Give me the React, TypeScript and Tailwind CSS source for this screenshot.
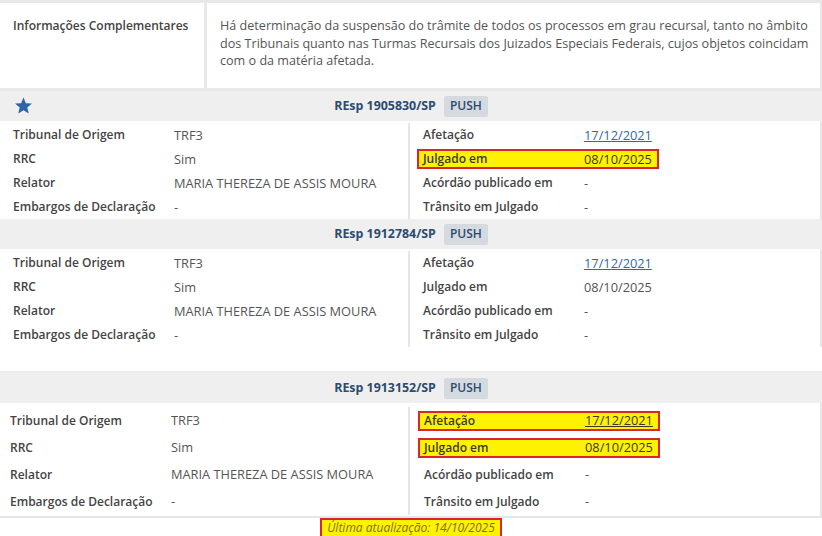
import React from 'react';

type Row = { label: string; value: string; link?: boolean; mark?: boolean };

interface Processo {
  numero: string;
  star?: boolean;
  big?: boolean;
  left: Row[];
  right: Row[];
}

const processos: Processo[] = [
  {
    numero: 'REsp 1905830/SP',
    star: true,
    left: [
      { label: 'Tribunal de Origem', value: 'TRF3' },
      { label: 'RRC', value: 'Sim' },
      { label: 'Relator', value: 'MARIA THEREZA DE ASSIS MOURA' },
      { label: 'Embargos de Declaração', value: '-' },
    ],
    right: [
      { label: 'Afetação', value: '17/12/2021', link: true },
      { label: 'Julgado em', value: '08/10/2025', mark: true },
      { label: 'Acórdão publicado em', value: '-' },
      { label: 'Trânsito em Julgado', value: '-' },
    ],
  },
  {
    numero: 'REsp 1912784/SP',
    left: [
      { label: 'Tribunal de Origem', value: 'TRF3' },
      { label: 'RRC', value: 'Sim' },
      { label: 'Relator', value: 'MARIA THEREZA DE ASSIS MOURA' },
      { label: 'Embargos de Declaração', value: '-' },
    ],
    right: [
      { label: 'Afetação', value: '17/12/2021', link: true },
      { label: 'Julgado em', value: '08/10/2025' },
      { label: 'Acórdão publicado em', value: '-' },
      { label: 'Trânsito em Julgado', value: '-' },
    ],
  },
];

const ultimo: Processo = {
  numero: 'REsp 1913152/SP',
  big: true,
  left: [
    { label: 'Tribunal de Origem', value: 'TRF3' },
    { label: 'RRC', value: 'Sim' },
    { label: 'Relator', value: 'MARIA THEREZA DE ASSIS MOURA' },
    { label: 'Embargos de Declaração', value: '-' },
  ],
  right: [
    { label: 'Afetação', value: '17/12/2021', link: true, mark: true },
    { label: 'Julgado em', value: '08/10/2025', mark: true },
    { label: 'Acórdão publicado em', value: '-' },
    { label: 'Trânsito em Julgado', value: '-' },
  ],
};

const Star = () => (
  <svg viewBox="0 0 24 24" className="w-[19px] h-[19px]" fill="#2f65a6">
    <path d="M12 1.8l3 7.2 7.7.6-5.9 5 1.8 7.6L12 18.1l-6.6 4.1 1.8-7.6-5.9-5 7.7-.6z" />
  </svg>
);

const Cell = ({ row, big }: { row: Row; big?: boolean }) => {
  const value = row.link ? (
    <span className={row.mark ? 'underline text-[12.8px] text-[#3a3a20]' : 'underline text-[12.8px] text-[#2a6ab3]'}>{row.value}</span>
  ) : (
    <span className={row.mark ? 'text-[12.8px] text-[#3a3a20]' : 'text-[12.8px] text-[#555]'}>{row.value}</span>
  );
  const rowH = big ? 'h-[27px]' : 'h-[24px]';
  if (row.mark) {
    return (
      <div className={`flex items-center ${rowH}`}>
        <div className="flex items-center w-[242px] -ml-[6px] h-[20px] border-2 border-[#d8262b] bg-[#fff200] pl-[4px]">
          <span className="w-[161px] font-semibold text-[#3a3a20]">{row.label}</span>
          {value}
        </div>
      </div>
    );
  }
  return (
    <div className={`flex items-center ${rowH}`}>
      <span className="w-[161px] shrink-0 font-semibold text-[#444]">{row.label}</span>
      {value}
    </div>
  );
};

const Bloco = ({ p }: { p: Processo }) => (
  <div>
    <div className="relative flex items-center justify-center gap-2 h-[30px] bg-[#efefef]">
      {p.star && (
        <span className="absolute left-[14px] top-[5px]">
          <Star />
        </span>
      )}
      <span className="font-bold text-[12.4px] text-[#2b4b6f]">{p.numero}</span>
      <span className="px-[6px] h-[21px] flex items-center bg-[#d4dae0] rounded-[2px] font-semibold text-[#2b4b6f]">PUSH</span>
    </div>
    <div className={`flex bg-white border-r-2 border-[#e6e6e6] ${p.big ? 'pt-[4px] pb-[1px]' : 'pt-[2px]'}`}>
      <div className={`w-[410px] ${p.big ? 'pl-[10px]' : 'pl-[13px]'} border-r-2 border-[#e6e6e6]`}>
        {p.left.map((r) => (
          <Cell key={r.label} row={r} big={p.big} />
        ))}
      </div>
      <div className={`flex-1 ${p.big ? 'pl-[14px]' : 'pl-[13px]'}`}>
        {p.right.map((r) => (
          <Cell key={r.label} row={r} big={p.big} />
        ))}
      </div>
    </div>
  </div>
);

export default function App() {
  return (
    <div className="w-[822px] h-[536px] overflow-hidden bg-white text-[12px] leading-none" style={{ fontFamily: '"Open Sans", "Liberation Sans", sans-serif' }}>
      <div className="flex border-t-[3px] border-b-[3px] border-[#e8e8e8] h-[91px]">
        <div className="w-[207px] pl-[13px] pt-[17px] font-semibold text-[#444] border-r-[3px] border-[#e8e8e8]">
          Informações Complementares
        </div>
        <div className="flex-1 pl-[13px] pr-[4px] pt-[14px] text-[12.6px] text-[#555] leading-[17.5px] border-r-2 border-[#e8e8e8]">
          Há determinação da suspensão do trâmite de todos os processos em grau recursal, tanto no âmbito dos Tribunais quanto nas Turmas Recursais dos Juizados Especiais Federais, cujos objetos coincidam com o da matéria afetada.
        </div>
      </div>
      {processos.map((p) => (
        <Bloco key={p.numero} p={p} />
      ))}
      <div className="h-[26px] bg-white border-b-2 border-[#ececec]" />
      <Bloco p={ultimo} />
      <div className="flex justify-center h-[22px] border-t-2 border-[#e6e6e6]">
        <span className="flex items-center h-[20px] px-[5px] border-2 border-[#d8262b] bg-[#fff200] italic text-[#7d7030]">
          Última atualização: 14/10/2025
        </span>
      </div>
    </div>
  );
}
